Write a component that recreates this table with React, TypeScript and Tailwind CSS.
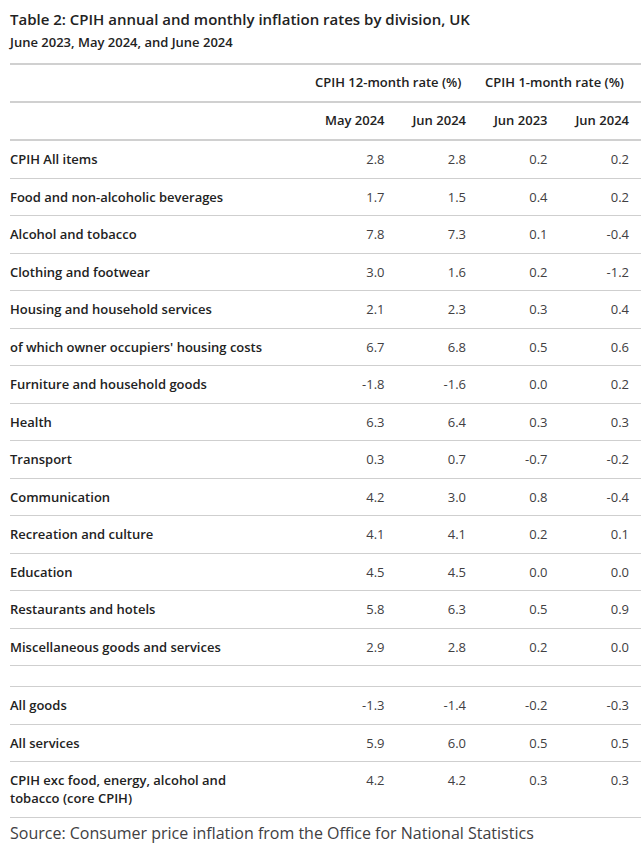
const rows: [string, string, string, string, string][] = [
  ["CPIH All items", "2.8", "2.8", "0.2", "0.2"],
  ["Food and non-alcoholic beverages", "1.7", "1.5", "0.4", "0.2"],
  ["Alcohol and tobacco", "7.8", "7.3", "0.1", "-0.4"],
  ["Clothing and footwear", "3.0", "1.6", "0.2", "-1.2"],
  ["Housing and household services", "2.1", "2.3", "0.3", "0.4"],
  ["of which owner occupiers' housing costs", "6.7", "6.8", "0.5", "0.6"],
  ["Furniture and household goods", "-1.8", "-1.6", "0.0", "0.2"],
  ["Health", "6.3", "6.4", "0.3", "0.3"],
  ["Transport", "0.3", "0.7", "-0.7", "-0.2"],
  ["Communication", "4.2", "3.0", "0.8", "-0.4"],
  ["Recreation and culture", "4.1", "4.1", "0.2", "0.1"],
  ["Education", "4.5", "4.5", "0.0", "0.0"],
  ["Restaurants and hotels", "5.8", "6.3", "0.5", "0.9"],
  ["Miscellaneous goods and services", "2.9", "2.8", "0.2", "0.0"],
];

const totals: [string, string, string, string, string][] = [
  ["All goods", "-1.3", "-1.4", "-0.2", "-0.3"],
  ["All services", "5.9", "6.0", "0.5", "0.5"],
  ["CPIH exc food, energy, alcohol and tobacco (core CPIH)", "4.2", "4.2", "0.3", "0.3"],
];

function Row({ r }: { r: [string, string, string, string, string] }) {
  return (
    <tr className="border-b border-[#cfcfcf]">
      <td className="pt-[9px] pb-[9.5px] align-top font-semibold text-[#222]">
        <span className="block max-w-[262px]">{r[0]}</span>
      </td>
      {r.slice(1).map((v, i) => (
        <td key={i} className="pt-[9px] pb-[9.5px] pr-[12px] text-right align-top text-[#414042]">
          {v}
        </td>
      ))}
    </tr>
  );
}

export default function App() {
  return (
    <div
      className="min-h-screen bg-white pl-[10px] text-[13px] leading-[18px]"
      style={{ fontFamily: '"Open Sans", "Liberation Sans", sans-serif' }}
    >
      <h1 className="pt-[8px] text-[15px] font-semibold leading-[22px] text-[#222]">
        Table 2: CPIH annual and monthly inflation rates by division, UK
      </h1>
      <p className="mt-[2px] text-[13px] font-semibold leading-[20px] text-[#222]">
        June 2023, May 2024, and June 2024
      </p>

      <table className="mt-[11px] w-full table-fixed border-collapse">
        <colgroup>
          <col />
          <col className="w-[81.5px]" />
          <col className="w-[81.5px]" />
          <col className="w-[81.5px]" />
          <col className="w-[81.5px]" />
        </colgroup>
        <thead>
          <tr className="border-t-2 border-b-2 border-[#d0d0d0]">
            <th />
            <th
              colSpan={2}
              className="pt-[8px] pb-[10px] pr-[17px] text-right font-semibold whitespace-nowrap text-[#222]"
            >
              CPIH 12-month rate (%)
            </th>
            <th
              colSpan={2}
              className="pt-[8px] pb-[10px] pr-[17px] text-right font-semibold whitespace-nowrap text-[#222]"
            >
              CPIH 1-month rate (%)
            </th>
          </tr>
          <tr className="border-b-2 border-[#d0d0d0]">
            <th />
            {["May 2024", "Jun 2024", "Jun 2023", "Jun 2024"].map((h, i) => (
              <th
                key={i}
                className="pt-[8px] pb-[10px] pr-[12px] text-right font-semibold whitespace-nowrap text-[#222]"
              >
                {h}
              </th>
            ))}
          </tr>
        </thead>
        <tbody>
          {rows.map((r) => (
            <Row key={r[0]} r={r} />
          ))}
          <tr className="border-b border-[#cfcfcf]">
            <td colSpan={5} className="h-[21px]" />
          </tr>
          {totals.map((r) => (
            <Row key={r[0]} r={r} />
          ))}
        </tbody>
      </table>

      <p className="mt-[3px] text-[16px] leading-[24px] text-[#414042]">
        Source: Consumer price inflation from the Office for National Statistics
      </p>
    </div>
  );
}
